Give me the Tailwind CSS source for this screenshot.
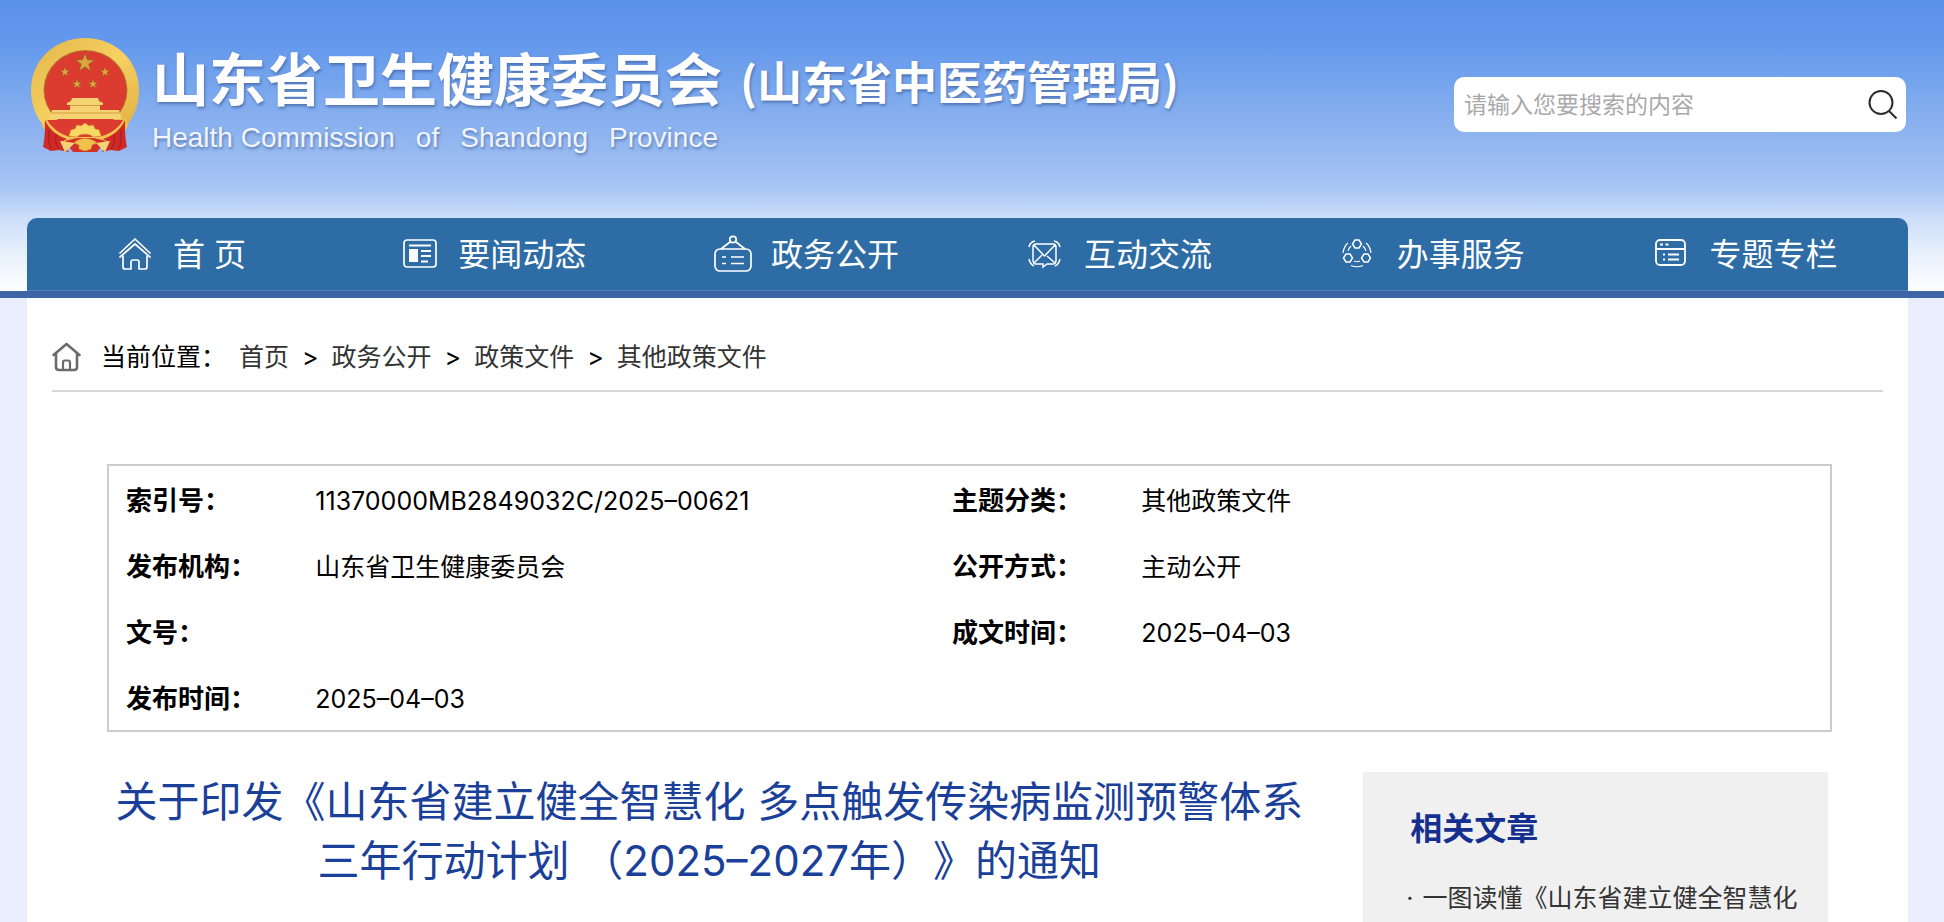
<!DOCTYPE html>
<html lang="zh-CN">
<head>
<meta charset="utf-8">
<meta name="viewport" content="width=device-width, initial-scale=1">
<title>山东省卫生健康委员会</title>
<script src="https://cdn.jsdelivr.net/npm/@tailwindcss/browser@4"></script>
</head>
<body class="flex min-h-screen flex-col bg-[#e9edfc] font-['Inter','Noto_Sans_CJK_SC',sans-serif] text-[25px] leading-9 text-black [text-spacing-trim:space-all]">

<header class="shrink-0 bg-[linear-gradient(to_bottom,#5a92e9_0px,#6499ec_45px,#83adee_110px,#98baf1_155px,#a8c6f4_188px,#c8dbf8_214px,#e6effc_250px,#fdfeff_290px)]">
  <div class="flex h-[218px] items-start justify-between pr-[38px] pl-[31px]">
    <a href="#" class="flex pt-[38px] text-white">
      <svg class="h-[115px] w-[108px] shrink-0" viewBox="0 0 108 115" aria-hidden="true">
        <defs>
          <linearGradient id="gold" x1="0" y1="0" x2="1" y2="1">
            <stop offset="0" stop-color="#e3b548"/><stop offset=".5" stop-color="#f6d162"/><stop offset="1" stop-color="#dfad3f"/>
          </linearGradient>
          <polygon id="star" points="0,-10 2.4,-3.2 9.5,-3.1 3.8,1.2 5.9,8.1 0,4 -5.9,8.1 -3.8,1.2 -9.5,-3.1 -2.4,-3.2"/>
        </defs>
        <path d="M54 0C84 0 108 22 108 52C108 73 98 88 84 98H24C10 88 0 73 0 52C0 22 24 0 54 0Z" fill="url(#gold)"/>
        <ellipse cx="54.500" cy="52" rx="42" ry="40" fill="#b5772c"/>
        <ellipse cx="54.500" cy="52.500" rx="41" ry="39.500" fill="#dc3c30"/>
        <g fill="#d9a63c" stroke="#8d5a22" stroke-width=".7">
          <use href="#star" transform="translate(54 25)"/>
          <use href="#star" transform="translate(34 34) scale(.5)"/>
          <use href="#star" transform="translate(74 34) scale(.5)"/>
          <use href="#star" transform="translate(46 46) scale(.5)"/>
          <use href="#star" transform="translate(62 46) scale(.5)"/>
        </g>
        <path d="M41 60H67L68 63L72 65V67H69V72H88L91 81H18L21 72H39V67H36V65L40 63Z" fill="#f5d373"/>
        <path d="M39 67.500H69M20 75H89" stroke="#d59f3e"/>
        <path d="M16 82H92C88 91 76 97 70 99H38C30 96 20 90 16 82Z" fill="#dc3c30"/>
        <path d="M15 80C20 91 32 99 42 99H66C78 98 88 90 94 80L97 88C90 99 80 106 66 107H42C28 106 17 98 11 88Z" fill="#f0c250"/>
        <path d="M14 82C18 92 27 98 36 101L30 104L38 114L28 112L20 113L12 109C14 99 14 92 14 82ZM94 82C90 92 81 98 72 101L78 104L71 114L80 112L88 113L96 109C94 99 94 92 94 82Z" fill="#cf2a27"/>
        <path d="M18 92C18 99 17 104 20 111M25 97C24 102 25 107 28 111M90 92C90 99 91 104 88 111M83 97C84 102 83 107 80 111" fill="none" stroke="#9e1c1f"/>
        <path d="M34 103L46 100H63L75 103L66 114H42Z" fill="#d42f28"/>
        <path d="M29 103L44 105L34 114ZM79 103L65 105L74 114Z" fill="#f5d373"/>
        <path d="M38 98L40 92L44 91L46 87L50 88L54 85L58 88L62 87L64 91L68 92L70 98L62 99C60 95 48 95 46 99Z" fill="#f8d864" stroke="#d8a43b" stroke-width=".6"/>
        <path d="M43 105C48 99 60 99 66 105L61 107L60 111L54 113L48 111L48 107Z" fill="#f0c24c" stroke="#c98e30" stroke-width=".6"/>
      </svg>
      <span class="ml-[13px] flex flex-col [text-shadow:1px_2px_3px_rgba(50,80,140,.6)]">
        <span class="flex h-[86px] items-center gap-[18px] font-bold whitespace-nowrap">
          <span class="text-[57px]">山东省卫生健康委员会</span>
          <span class="font-['Noto_Sans_CJK_SC',sans-serif] text-[45px]">(山东省中医药管理局)</span>
        </span>
        <span class="flex w-[566px] justify-between font-['Liberation_Sans',sans-serif] text-[28px] leading-7 text-white/90">
          <span>Health Commission</span><span>of</span><span>Shandong</span><span>Province</span>
        </span>
      </span>
    </a>
    <form class="mt-[77px] flex h-[55px] w-[452px] items-center rounded-[10px] bg-white pr-[8px] pl-[10px]">
      <input type="text" aria-label="搜索" placeholder="请输入您要搜索的内容" class="min-w-0 flex-1 text-[23px] outline-none placeholder:text-[#a9a9a9]">
      <button type="button" aria-label="搜索" class="shrink-0">
        <svg class="size-[30px]" viewBox="0 0 30 30" fill="none" stroke="#2b2b2b" stroke-width="2"><circle cx="13" cy="12.500" r="11.500"/><path d="M21 21L28.500 28.500"/></svg>
      </button>
    </form>
  </div>

  <nav class="mr-9 ml-[27px] grid h-[73px] grid-cols-6 rounded-t-[10px] border-b border-[#547fb0] bg-[#2d6ca5] pt-[2px] pr-1 text-[32px] whitespace-nowrap text-white">
    <a href="#" class="flex items-center justify-center gap-5 pr-1">
      <svg class="size-9" viewBox="0 0 36 36" fill="none" stroke="#fff" stroke-width="1.700" stroke-linejoin="round" stroke-linecap="round"><path d="M3 16L18 2L33 16M3 20L18 7L33 20"/><path d="M6 19V30Q6 32 8 32H14V25Q14 23 16 23H20Q22 23 22 25V32H28Q30 32 30 30V19"/></svg>
      首 页</a>
    <a href="#" class="flex items-center justify-center gap-5 pr-1">
      <svg class="size-9" viewBox="0 0 36 36" fill="none" stroke="#fff" stroke-width="1.700"><rect x="2" y="3" width="32" height="27" rx="3"/><path d="M7 8.500H29M19 14H29M19 19H29M19 24.500H26" stroke-width="2"/><rect x="7" y="12" width="9" height="13" fill="#fff" stroke="none"/></svg>
      要闻动态</a>
    <a href="#" class="flex items-center justify-center gap-5 pr-1">
      <svg class="size-9 overflow-visible" viewBox="0 0 36 36" fill="none" stroke="#fff" stroke-width="1.700"><rect x="0" y="12" width="36" height="22" rx="5"/><circle cx="18" cy="2.500" r="3.200"/><path d="M15 5L6 12M21 5L30 12M7 20H11M16 20H29M7 26.500H11M16 26.500H29"/></svg>
      政务公开</a>
    <a href="#" class="flex items-center justify-center gap-5 pr-1">
      <svg class="size-9" viewBox="0 0 36 36" fill="none" stroke="#fff" stroke-width="1.500"><path d="M8 7H25Q28 7 28 10V23Q28 27 25 27H19L15 30V27H8Q5 27 5 23V10Q5 7 8 7ZM6 8L16.500 19L27 8M6 26L14 18M27 26L19 19"/><path d="M1 10Q2 5 7 4M26 4Q31 5 32 10M1 22Q2 27 6 29M27 29Q31 27 32 22"/></svg>
      互动交流</a>
    <a href="#" class="flex items-center justify-center gap-5 pr-1">
      <svg class="size-9" viewBox="0 0 36 36" fill="none" stroke="#fff" stroke-width="1.500"><path d="M14 3H18L20.500 7L18 11H14L11.500 7ZM5 17H9L11.500 21L9 25H5L2.500 21ZM23 17H27L29.500 21L27 25H23L20.500 21Z"/><path d="M2 16Q3 9 7 6M30 16Q29 9 25 6M10 28.500Q16 31 22 28.500M7 14Q7.500 11.500 10 9M25 14Q24.500 11.500 22 9M13 24Q16 25.500 19 24" stroke-width="1.200"/></svg>
      办事服务</a>
    <a href="#" class="flex items-center justify-center gap-5 pr-1">
      <svg class="size-9" viewBox="0 0 36 36" fill="none" stroke="#fff" stroke-width="1.800"><rect x="2" y="3" width="29" height="25" rx="4"/><path d="M2 12H31M6 7.500H9M11.500 7.500H14.500M9 17.500H11M14 17.500H25M9 22.500H11M14 22.500H25"/></svg>
      专题专栏</a>
  </nav>
</header>
<div class="h-[7px] shrink-0 bg-[#3c66a3]"></div>

<main class="mr-9 ml-[27px] flex grow flex-col bg-white px-[25px] pt-[32px]">
  <nav aria-label="当前位置" class="flex items-center gap-[13px] border-b-2 border-[#d8d8d8] pt-[9px] pb-[15px]">
    <svg class="mr-[7px] h-[30px] w-[29px] shrink-0" viewBox="0 0 29 30" fill="none" stroke="#6b6b6b" stroke-width="2.600" stroke-linejoin="round" stroke-linecap="round"><path d="M1.500 13L14.500 2L27.500 13M4 11.500V25Q4 28 7 28H22Q25 28 25 25V11.500"/><path d="M11 28V20.500Q11 18.500 13 18.500H16Q18 18.500 18 20.500V28" stroke-width="2.200"/></svg>
    <span>当前位置：</span>
    <a href="#" class="text-[#333]">首页</a><span>&gt;</span>
    <a href="#" class="text-[#333]">政务公开</a><span>&gt;</span>
    <a href="#" class="text-[#333]">政策文件</a><span>&gt;</span>
    <a href="#" class="text-[#333]">其他政策文件</a>
  </nav>

  <div class="mt-[72px] mr-[51px] ml-[55px] flex grow flex-col">
    <div class="border-2 border-[#ccc]">
      <table class="w-full table-fixed text-left">
        <colgroup><col class="w-[11%]"><col class="w-[37%]"><col class="w-[11%]"><col class="w-[41%]"></colgroup>
        <tbody class="[&_td]:pt-1 [&_td]:pl-[17px] [&_th]:pt-1 [&_th]:pl-[17px] [&_th]:text-[26px]">
          <tr class="h-[66px]"><th scope="row">索引号：</th><td>11370000MB2849032C/2025–00621</td><th scope="row">主题分类：</th><td>其他政策文件</td></tr>
          <tr class="h-[66px]"><th scope="row">发布机构：</th><td>山东省卫生健康委员会</td><th scope="row">公开方式：</th><td>主动公开</td></tr>
          <tr class="h-[66px]"><th scope="row">文号：</th><td></td><th scope="row">成文时间：</th><td>2025–04–03</td></tr>
          <tr class="h-[66px]"><th scope="row">发布时间：</th><td>2025–04–03</td><td></td><td></td></tr>
        </tbody>
      </table>
    </div>

    <div class="mt-10 mr-1 flex grow items-stretch justify-between">
      <h1 class="w-[70%] text-center text-[42px] leading-[59px] whitespace-nowrap text-[#1a409a]">关于印发《山东省建立健全智慧化 多点触发传染病监测预警体系<br>三年行动计划 （2025–2027年）》的通知</h1>
      <aside class="w-[27%] bg-[#f0f0f0] pt-[34px] pr-4 pl-[43px]">
        <h2 class="pl-1 text-[32px] leading-[46px] font-bold text-[#142f8f]">相关文章</h2>
        <ul class="mt-[28px] text-[#333]">
          <li class="flex gap-[9px] whitespace-nowrap"><span aria-hidden="true">·</span><a href="#">一图读懂《山东省建立健全智慧化</a></li>
        </ul>
      </aside>
    </div>
  </div>
</main>
</body>
</html>
